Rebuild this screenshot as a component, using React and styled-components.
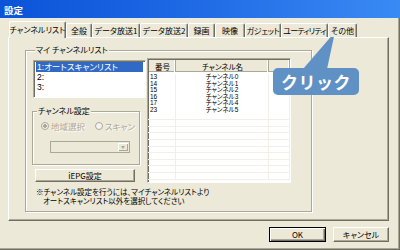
import React from 'react';
import styled, { createGlobalStyle } from 'styled-components';

const GlobalStyle = createGlobalStyle`
  html, body {
    margin: 0;
    padding: 0;
    background: #ffffff;
  }
`;

const Window = styled.div`
  position: relative;
  width: 400px;
  height: 250px;
  box-sizing: border-box;
  background: #ece9d8;
  box-shadow: inset -1px -1px 0 #716f64, inset -2px -2px 0 #aca899;
  overflow: hidden;
  font-family: "Noto Sans CJK JP", "Noto Sans", sans-serif;
  font-feature-settings: "palt";
  color: #000;
`;

const TitleBar = styled.div`
  height: 18px;
  box-sizing: border-box;
  display: flex;
  align-items: center;
  padding: 2px 0 0 4px;
  background: linear-gradient(to right, #0b54d8 0%, #1d68e4 45%, #3a8af4 100%);
  color: #fff;
  font-size: 9.5px;
  font-weight: bold;
`;

const Content = styled.div`
  padding: 3px 0 0 8px;
`;

const TabStrip = styled.div`
  position: relative;
  z-index: 1;
  display: flex;
  align-items: flex-end;
  height: 17px;
  margin-bottom: -1px;
  padding-left: 1px;
`;

const Tab = styled.div`
  width: ${(p) => p.$w}px;
  height: ${(p) => (p.$active ? 17 : 14)}px;
  margin-bottom: ${(p) => (p.$active ? 0 : 1)}px;
  box-sizing: border-box;
  display: flex;
  align-items: center;
  justify-content: center;
  padding-top: ${(p) => (p.$active ? 0 : 1)}px;
  background: #ece9d8;
  border-top: 1px solid #fff;
  border-left: 1px solid #fff;
  border-right: 1px solid #716f64;
  border-radius: 2px 2px 0 0;
  box-shadow: inset -1px 0 0 #aca899;
  font-size: 8px;
  letter-spacing: ${(p) => p.$ls || 0}px;
  line-height: 10px;
  white-space: nowrap;
`;

const Panel = styled.div`
  width: 381px;
  height: 184px;
  box-sizing: border-box;
  padding: 12px 0 0 16px;
  border-top: 1px solid #fff;
  border-left: 1px solid #fff;
  border-right: 1px solid #716f64;
  border-bottom: 1px solid #716f64;
  box-shadow: inset -1px -1px 0 #aca899;
`;

const GroupBox = styled.div`
  width: ${(p) => p.$w}px;
  height: ${(p) => p.$h}px;
  box-sizing: border-box;
  padding-left: ${(p) => p.$pl || 0}px;
  margin-left: ${(p) => p.$ml || 0}px;
  margin-top: ${(p) => p.$mt || 0}px;
  border: 1px solid #aca899;
  box-shadow: inset 1px 1px 0 #fff, 1px 1px 0 #fff;
`;

const GroupLabel = styled.div`
  width: fit-content;
  margin: -6px 0 0 ${(p) => p.$ml}px;
  padding: 0 1px;
  background: #ece9d8;
  font-size: 8px;
  line-height: 10px;
  white-space: nowrap;
`;

const MainRow = styled.div`
  display: flex;
  align-items: flex-start;
  margin-top: 3px;
`;

const LeftColumn = styled.div`
  width: 114px;
  padding-top: 2px;
  display: flex;
  flex-direction: column;
`;

const ListBox = styled.div`
  width: 113px;
  height: 38px;
  box-sizing: border-box;
  padding: 1px 2px;
  background: #fff;
  border-top: 1px solid #aca899;
  border-left: 1px solid #aca899;
  border-right: 1px solid #fff;
  border-bottom: 1px solid #fff;
  box-shadow: inset 1px 1px 0 #716f64;
`;

const ListItem = styled.div`
  height: 10px;
  padding-left: 1px;
  font-family: "Liberation Sans", "Noto Sans CJK JP", sans-serif;
  font-size: 8.5px;
  line-height: 10px;
  white-space: nowrap;
  background: ${(p) => (p.$selected ? '#316ac5' : 'transparent')};
  color: ${(p) => (p.$selected ? '#fff' : '#000')};
`;

const RadioRow = styled.div`
  display: flex;
  align-items: center;
  height: 10px;
  margin-top: 5px;
  padding-left: 8px;
  gap: 2px;
`;

const Radio = styled.span`
  width: 8px;
  height: 8px;
  flex: none;
  box-sizing: border-box;
  border-radius: 50%;
  border: 1px solid #aca899;
  background: ${(p) => (p.$checked ? 'radial-gradient(circle, #aca899 0 1.6px, #f4f3ee 2px)' : '#f4f3ee')};
  margin-left: ${(p) => p.$ml || 0}px;
`;

const DisabledText = styled.span`
  font-size: 8.5px;
  line-height: 10px;
  color: #aca899;
  text-shadow: 1px 1px 0 #fff;
  white-space: nowrap;
`;

const Combo = styled.div`
  display: flex;
  justify-content: flex-end;
  width: 80px;
  height: 12px;
  box-sizing: border-box;
  margin: 10px 0 0 17px;
  padding: 1px;
  background: #ece9d8;
  border: 1px solid #aca899;
`;

const ComboButton = styled.div`
  width: 10px;
  display: flex;
  align-items: center;
  justify-content: center;
  background: #ece9d8;
  box-shadow: inset 1px 1px 0 #fff, inset -1px -1px 0 #aca899;
  &::after {
    content: '';
    border-left: 2.5px solid transparent;
    border-right: 2.5px solid transparent;
    border-top: 3px solid #aca899;
  }
`;

const PushButton = styled.div`
  width: ${(p) => p.$w}px;
  height: ${(p) => p.$h}px;
  box-sizing: border-box;
  margin-left: ${(p) => p.$ml || 0}px;
  margin-top: ${(p) => p.$mt || 0}px;
  display: flex;
  align-items: center;
  justify-content: center;
  background: #ece9d8;
  border: 1px solid ${(p) => (p.$default ? '#000' : '#fff')};
  border-right-color: ${(p) => (p.$default ? '#000' : '#716f64')};
  border-bottom-color: ${(p) => (p.$default ? '#000' : '#716f64')};
  box-shadow: ${(p) =>
    p.$default
      ? 'inset 1px 1px 0 #fff, inset -1px -1px 0 #716f64, inset -2px -2px 0 #aca899'
      : 'inset -1px -1px 0 #aca899'};
  font-size: 8px;
  line-height: 10px;
  white-space: nowrap;
`;

const ListView = styled.div`
  width: 144px;
  height: 125px;
  box-sizing: border-box;
  background: #fff;
  border-top: 1px solid #aca899;
  border-left: 1px solid #aca899;
  border-right: 1px solid #fff;
  border-bottom: 1px solid #fff;
  box-shadow: inset 1px 1px 0 #716f64;
  overflow: hidden;
`;

const HeaderRow = styled.div`
  display: flex;
  height: 12px;
  padding: 1px 0 0 1px;
  margin-bottom: 2px;
`;

const HeaderCell = styled.div`
  width: ${(p) => p.$w}px;
  flex: ${(p) => (p.$w ? 'none' : 1)};
  box-sizing: border-box;
  display: flex;
  align-items: center;
  justify-content: center;
  background: #ece9d8;
  box-shadow: inset -1px 0 0 #aca899, inset -2px 0 0 #fff, inset 0 -1px 0 #aca899;
  font-size: 7.5px;
  line-height: 11px;
  white-space: nowrap;
`;

const Row = styled.div`
  display: flex;
  height: 6.6px;
  padding-left: 1px;
  box-shadow: ${(p) => (p.$filled ? 'none' : 'inset 0 -1px 0 #f1efe6')};
`;

const Cell = styled.div`
  width: ${(p) => p.$w}px;
  flex: ${(p) => (p.$w ? 'none' : 1)};
  box-sizing: border-box;
  padding-left: ${(p) => (p.$center ? 0 : 1)}px;
  text-align: ${(p) => (p.$center ? 'center' : 'left')};
  border-right: 1px solid #f1efe6;
  font-family: "Liberation Sans", "Noto Sans CJK JP", sans-serif;
  font-size: 6.5px;
  line-height: 6.6px;
  white-space: nowrap;
`;

const Note = styled.div`
  margin-top: 5px;
  padding-left: 10px;
  text-indent: -7px;
  font-family: "Liberation Sans", "Noto Sans CJK JP", sans-serif;
  font-size: 7.5px;
  line-height: 9px;
  white-space: nowrap;
`;

const ButtonRow = styled.div`
  width: 381px;
  display: flex;
  justify-content: flex-end;
  gap: 7px;
  margin-top: 6px;
`;

const Callout = styled.div`
  position: absolute;
  left: 273px;
  top: 68px;
  width: 86px;
  height: 27px;
  border-radius: 5px;
  background: #5f91c4;
  display: flex;
  align-items: center;
  justify-content: center;
  color: #fff;
  font-size: 17px;
  font-weight: bold;
  font-feature-settings: normal;
  letter-spacing: 0.5px;
`;

const CalloutTail = styled.svg`
  position: absolute;
  left: 0;
  top: 0;
  pointer-events: none;
`;

const tabs = [
  ['チャンネルリスト', 57],
  ['全般', 26],
  ['データ放送1', 48],
  ['データ放送2', 48],
  ['録画', 27],
  ['映像', 30],
  ['ガジェット', 36, -0.3],
  ['ユーティリティ', 47, -0.8],
  ['その他', 29],
];

const channels = [
  ['13', 'チャンネル0'],
  ['14', 'チャンネル1'],
  ['15', 'チャンネル2'],
  ['16', 'チャンネル3'],
  ['17', 'チャンネル4'],
  ['23', 'チャンネル5'],
];

export default function App() {
  const rows = [...channels];
  while (rows.length < 16) rows.push(['', '']);

  return (
    <>
      <GlobalStyle />
      <Window>
        <TitleBar>設定</TitleBar>
        <Content>
          <TabStrip>
            {tabs.map(([label, w, ls], i) => (
              <Tab key={label} $w={w} $ls={ls} $active={i === 0}>
                {label}
              </Tab>
            ))}
          </TabStrip>
          <Panel>
            <GroupBox $w={287} $h={162} $pl={7}>
              <GroupLabel $ml={2}>マイ チャンネルリスト</GroupLabel>
              <MainRow>
                <LeftColumn>
                  <ListBox>
                    <ListItem $selected>1:オートスキャンリスト</ListItem>
                    <ListItem>2:</ListItem>
                    <ListItem>3:</ListItem>
                  </ListBox>
                  <GroupBox $w={108} $h={54} $ml={-1} $mt={13}>
                    <GroupLabel $ml={4}>チャンネル設定</GroupLabel>
                    <RadioRow>
                      <Radio $checked />
                      <DisabledText>地域選択</DisabledText>
                      <Radio $ml={8} />
                      <DisabledText>スキャン</DisabledText>
                    </RadioRow>
                    <Combo>
                      <ComboButton />
                    </Combo>
                  </GroupBox>
                  <PushButton $w={100} $h={13} $ml={2} $mt={4}>
                    iEPG設定
                  </PushButton>
                </LeftColumn>
                <ListView>
                  <HeaderRow>
                    <HeaderCell $w={27}>番号</HeaderCell>
                    <HeaderCell $w={93}>チャンネル名</HeaderCell>
                    <HeaderCell />
                  </HeaderRow>
                  {rows.map(([no, name], i) => (
                    <Row key={i} $filled={!!no}>
                      <Cell $w={27}>{no}</Cell>
                      <Cell $w={93} $center>
                        {name}
                      </Cell>
                      <Cell />
                    </Row>
                  ))}
                </ListView>
              </MainRow>
              <Note>
                ※チャンネル設定を行うには、マイチャンネルリストより
                <br />
                オートスキャンリスト以外を選択してください
              </Note>
            </GroupBox>
          </Panel>
          <ButtonRow>
            <PushButton $w={57} $h={15} $default>
              OK
            </PushButton>
            <PushButton $w={56} $h={15}>
              キャンセル
            </PushButton>
          </ButtonRow>
        </Content>
        <CalloutTail width="400" height="250">
          <polygon points="303,69 327,69 335,32" fill="#5f91c4" />
        </CalloutTail>
        <Callout>クリック</Callout>
      </Window>
    </>
  );
}
